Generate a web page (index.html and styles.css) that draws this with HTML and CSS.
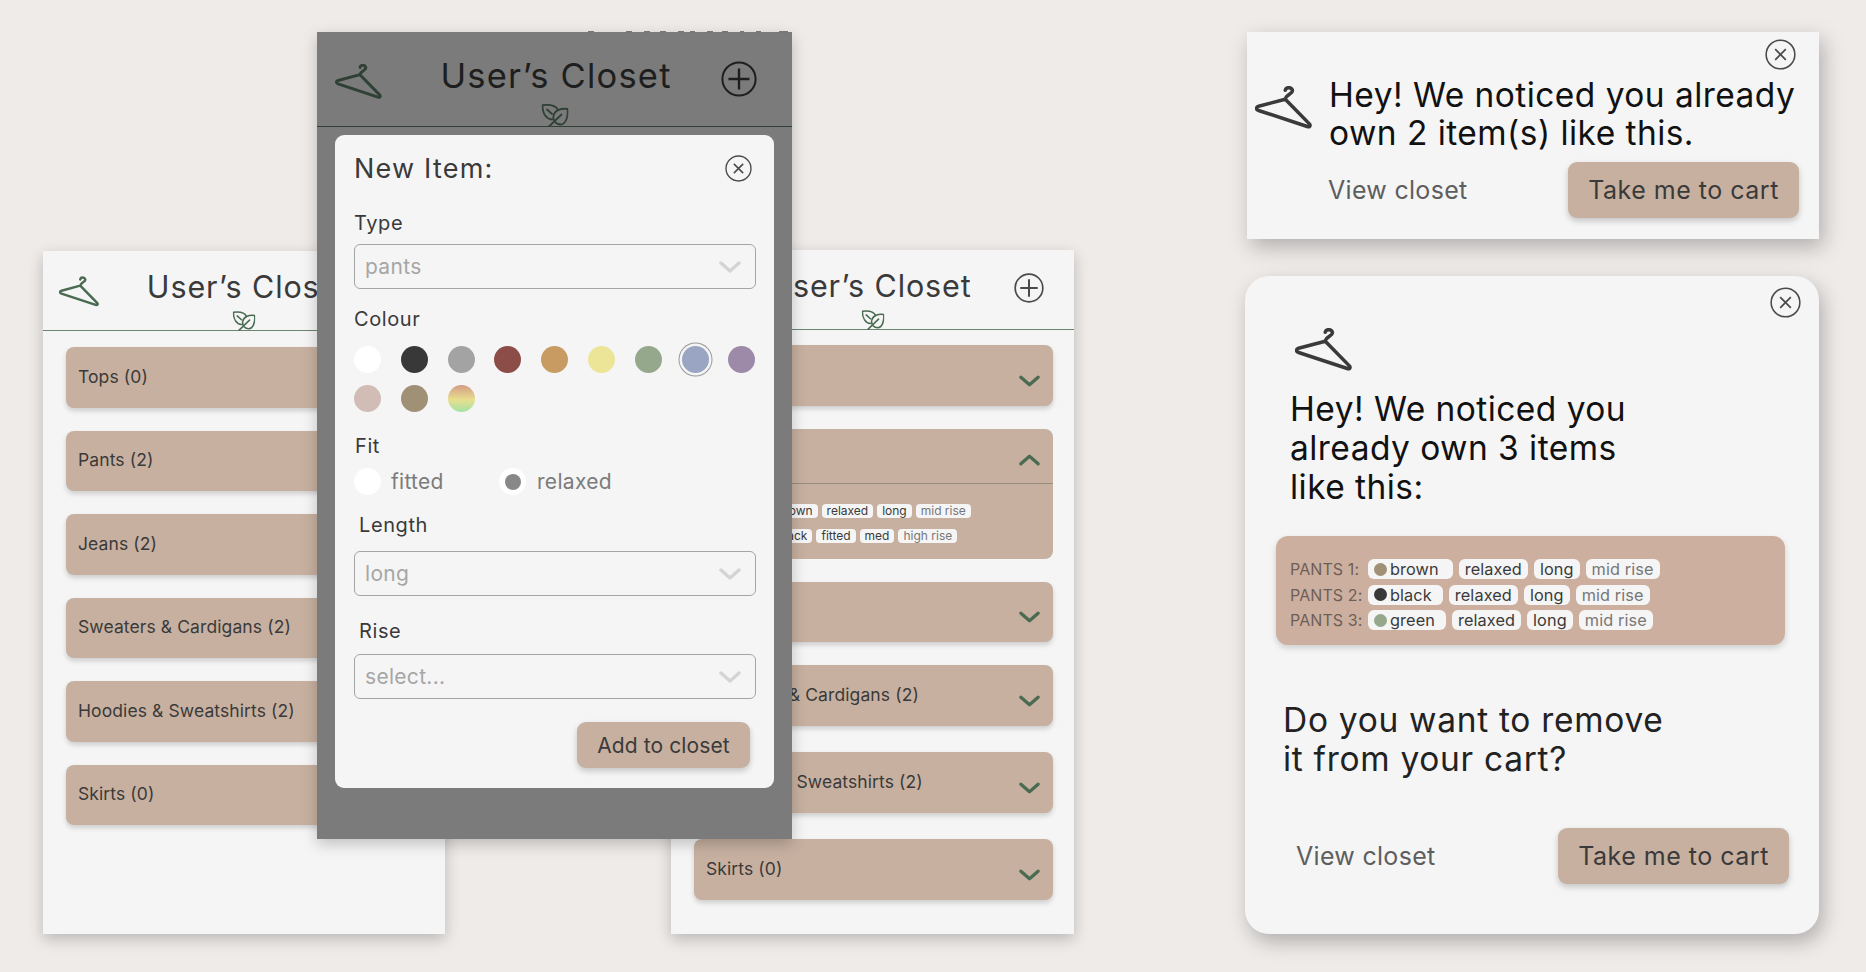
FILE: index.html
```html
<!DOCTYPE html>
<html lang="en">
<head>
    <meta charset="UTF-8">
    <title>User's Closet</title>
    <link rel="stylesheet" href="styles.css">
</head>
<body>
    <svg width="0" height="0" class="defs">
        <symbol id="hanger" viewBox="0 0 48 36">
            <path d="M25.5 3.5C26 .8 30.5 .4 31.5 3.5 32.2 6.5 26.5 6.5 25.5 11L46 32C47 34 45.5 34.5 44 34L3 20.5C.5 19.5 1 17.5 3 17L25.5 11" fill="none" stroke="currentColor" stroke-width="3" stroke-linecap="round" stroke-linejoin="round"/>
        </symbol>
        <symbol id="leaf" viewBox="0 0 27 23">
            <path d="M10.5 15.5C5 15 1 10 1 1.2 7 .4 14 1 16.5 6M5.5 5.5 10.5 10M26 5C20 4 13 6 12 12 11 17 15 20.5 19 20.5 24 20.5 27 13 26 5ZM7.5 22.5 20 10.5" fill="none" stroke="currentColor" stroke-width="1.8" stroke-linejoin="round" stroke-linecap="round"/>
        </symbol>
        <symbol id="plus" viewBox="0 0 36 36">
            <circle cx="18" cy="18" r="16.6" fill="none" stroke="currentColor" stroke-width="2"/>
            <path d="M18 7.5V28.5M7.5 18H28.5" stroke="currentColor" stroke-width="2.4"/>
        </symbol>
        <symbol id="close" viewBox="0 0 32 32">
            <circle cx="16" cy="16" r="14.8" fill="none" stroke="currentColor" stroke-width="1.6"/>
            <path d="M10.5 10.5 21.5 21.5M21.5 10.5 10.5 21.5" stroke="currentColor" stroke-width="1.8"/>
        </symbol>
        <symbol id="chevron" viewBox="0 0 22 12">
            <path d="M2 2 11 10 20 2" fill="none" stroke="currentColor" stroke-width="3.4" stroke-linecap="round" stroke-linejoin="round"/>
        </symbol>
    </svg>

    <!-- closet list, behind the overlay -->
    <section class="screen screen-left">
        <header class="head">
            <svg class="hanger"><use href="#hanger"/></svg>
            <h1 class="title">User’s Closet</h1>
            <svg class="plus"><use href="#plus"/></svg>
            <svg class="leaf"><use href="#leaf"/></svg>
        </header>
        <div class="rows">
            <div class="row"><span>Tops (0)</span></div>
            <div class="row"><span>Pants (2)</span></div>
            <div class="row"><span>Jeans (2)</span></div>
            <div class="row"><span>Sweaters &amp; Cardigans (2)</span></div>
            <div class="row"><span>Hoodies &amp; Sweatshirts (2)</span></div>
            <div class="row"><span>Skirts (0)</span></div>
        </div>
    </section>

    <!-- closet list with pants opened -->
    <section class="screen screen-right">
        <header class="head">
            <svg class="hanger"><use href="#hanger"/></svg>
            <h1 class="title">User’s Closet</h1>
            <svg class="plus"><use href="#plus"/></svg>
            <svg class="leaf"><use href="#leaf"/></svg>
        </header>
        <div class="rows">
            <div class="row"><span>Tops (0)</span><svg class="chev"><use href="#chevron"/></svg></div>
            <div class="row row-open">
                <div class="row-top"><span>Pants (2)</span><svg class="chev chev-up"><use href="#chevron"/></svg></div>
                <div class="row-body">
                    <div class="minis"><span class="mini-label">PANTS 1:</span><span class="mini">brown</span><span class="mini">relaxed</span><span class="mini">long</span><span class="mini mini-soft">mid rise</span></div>
                    <div class="minis"><span class="mini-label">PANTS 2:</span><span class="mini">black</span><span class="mini">fitted</span><span class="mini">med</span><span class="mini mini-soft">high rise</span></div>
                </div>
            </div>
            <div class="row"><span>Jeans (2)</span><svg class="chev"><use href="#chevron"/></svg></div>
            <div class="row"><span>Sweaters &amp; Cardigans (2)</span><svg class="chev"><use href="#chevron"/></svg></div>
            <div class="row row-far"><span>Hoodies &amp; Sweatshirts (2)</span><svg class="chev"><use href="#chevron"/></svg></div>
            <div class="row row-far"><span>Skirts (0)</span><svg class="chev"><use href="#chevron"/></svg></div>
        </div>
    </section>

    <svg class="clipped" width="240" height="2">
        <path d="M28 0h6v2h-6zM66 0h6v2h-6zM84 0h6v2h-6zM100 0h6v2h-6zM118 0h6v2h-6zM130 0h5v2h-5zM147 0h6v2h-6zM162 0h6v2h-6zM180 0h4v2h-4zM196 0h5v2h-5zM219 0h9v2h-9z" fill="#777"/>
    </svg>

    <!-- new item form -->
    <section class="screen screen-dim">
        <header class="head">
            <svg class="hanger"><use href="#hanger"/></svg>
            <h1 class="title">User’s Closet</h1>
            <svg class="plus"><use href="#plus"/></svg>
            <svg class="leaf"><use href="#leaf"/></svg>
        </header>
        <form class="modal">
            <div class="modal-head">
                <h2 class="modal-title">New Item:</h2>
                <svg class="close-sm"><use href="#close"/></svg>
            </div>
            <div class="label label-type">Type</div>
            <div class="select"><span>pants</span><svg class="chev"><use href="#chevron"/></svg></div>
            <div class="label label-colour">Colour</div>
            <div class="swatches">
                <i class="swatch c-white"></i>
                <i class="swatch c-black"></i>
                <i class="swatch c-grey"></i>
                <i class="swatch c-red"></i>
                <i class="swatch c-orange"></i>
                <i class="swatch c-yellow"></i>
                <i class="swatch c-green"></i>
                <i class="swatch c-blue picked"></i>
                <i class="swatch c-purple"></i>
                <i class="swatch c-pink"></i>
                <i class="swatch c-brown"></i>
                <i class="swatch c-multi"></i>
            </div>
            <div class="label label-fit">Fit</div>
            <div class="fits">
                <i class="radio"></i><span class="fit-text">fitted</span>
                <i class="radio radio-on"></i><span class="fit-text">relaxed</span>
            </div>
            <div class="label label-length">Length</div>
            <div class="select"><span>long</span><svg class="chev"><use href="#chevron"/></svg></div>
            <div class="label label-rise">Rise</div>
            <div class="select"><span>select...</span><svg class="chev"><use href="#chevron"/></svg></div>
            <div class="modal-foot"><button type="button" class="btn btn-sm">Add to closet</button></div>
        </form>
    </section>

    <!-- small nudge -->
    <section class="card card-small">
        <svg class="close"><use href="#close"/></svg>
        <div class="nudge">
            <svg class="hanger-dark"><use href="#hanger"/></svg>
            <p class="say">Hey! We noticed you already<br>own 2 item(s) like this.</p>
        </div>
        <div class="actions">
            <a class="link">View closet</a>
            <button type="button" class="btn">Take me to cart</button>
        </div>
    </section>

    <!-- detailed nudge -->
    <section class="card card-big">
        <svg class="close"><use href="#close"/></svg>
        <svg class="hanger-dark"><use href="#hanger"/></svg>
        <p class="say say-first">Hey! We noticed you<br>already own 3 items<br>like this:</p>
        <div class="panel">
            <div class="line"><span class="line-label">PANTS 1:</span><span class="tag tag-wide"><i class="dot c-brown"></i>brown</span><span class="tag">relaxed</span><span class="tag">long</span><span class="tag tag-soft">mid rise</span></div>
            <div class="line"><span class="line-label">PANTS 2:</span><span class="tag"><i class="dot c-black"></i>black</span><span class="tag">relaxed</span><span class="tag">long</span><span class="tag tag-soft">mid rise</span></div>
            <div class="line"><span class="line-label">PANTS 3:</span><span class="tag"><i class="dot c-green"></i>green</span><span class="tag">relaxed</span><span class="tag">long</span><span class="tag tag-soft">mid rise</span></div>
        </div>
        <p class="say say-second">Do you want to remove<br>it from your cart?</p>
        <div class="actions actions-big">
            <a class="link">View closet</a>
            <button type="button" class="btn">Take me to cart</button>
        </div>
    </section>
</body>
</html>
```

FILE: styles.css
```css
body {
    margin: 0;
    width: 1866px;
    height: 972px;
    overflow: hidden;
    position: relative;
    background-color: #eeebe9;
    color: #3a3a3a;
    font-family: Inter, "Noto Sans", sans-serif;
}
.defs {
    position: absolute;
}

/* phone screens sit freely on the board */
.screen {
    position: absolute;
    box-sizing: border-box;
    background-color: #f5f5f5;
    box-shadow: 0 5px 14px rgba(0, 0, 0, .22);
}
.screen-left {
    left: 43px;
    top: 251px;
    width: 402px;
    height: 683px;
}
.screen-right {
    left: 671px;
    top: 250px;
    width: 403px;
    height: 684px;
}
.screen-dim {
    left: 317px;
    top: 32px;
    width: 475px;
    height: 807px;
    background-color: #7b7b7b;
    color: #1e1e1e;
    z-index: 2;
}
.clipped {
    position: absolute;
    left: 560px;
    top: 31px;
    z-index: 3;
}

.head {
    position: relative;
    display: flex;
    justify-content: space-between;
    align-items: flex-start;
    box-sizing: border-box;
    height: 80px;
    padding: 0 30px 0 16px;
    border-bottom: 1.5px solid #6c8570;
    color: #4a6b52;
}
.hanger {
    width: 40px;
    height: 31px;
    margin-top: 25px;
}
.plus {
    width: 30px;
    height: 30px;
    margin-top: 23px;
    color: #4a4a4a;
}
.title {
    margin: 19px 0 0;
    font-size: 30.5px;
    line-height: 34px;
    font-weight: 400;
    letter-spacing: .9px;
    white-space: nowrap;
    color: #3a3a3a;
}
.leaf {
    position: absolute;
    left: 50%;
    bottom: -1px;
    width: 23px;
    height: 20px;
    transform: translateX(-50%);
}
.screen-left .title {
    margin-left: 12px;
}
.screen-dim .head {
    height: 95px;
    padding: 0 35px 0 18px;
    border-bottom-color: #2f4034;
    color: #2f4034;
}
.screen-dim .hanger {
    width: 47px;
    height: 35px;
    margin-top: 32px;
}
.screen-dim .title {
    margin: 25px 0 0 9px;
    font-size: 34.5px;
    line-height: 38px;
    letter-spacing: 1.2px;
    color: #1e1e1e;
}
.screen-dim .plus {
    width: 36px;
    height: 36px;
    margin-top: 29px;
    color: #1e1e1e;
}
.screen-dim .leaf {
    width: 27px;
    height: 23px;
    bottom: -1px;
}

.rows {
    display: flex;
    flex-direction: column;
    gap: 23px;
    padding: 16px 21px 0 23px;
}
.screen-right .rows {
    padding-top: 15px;
}
.row {
    display: flex;
    justify-content: space-between;
    align-items: center;
    box-sizing: border-box;
    height: 60.5px;
    padding: 0 13px 2px 12px;
    border-radius: 8px;
    background-color: #c7b0a0;
    box-shadow: 0 3px 5px rgba(0, 0, 0, .16);
    font-size: 17.5px;
    letter-spacing: .1px;
}
.row-far {
    margin-top: 3.5px;
}
.row-open {
    display: block;
    height: 130px;
    padding: 0;
    box-shadow: none;
}
.row-top {
    display: flex;
    justify-content: space-between;
    align-items: center;
    box-sizing: border-box;
    height: 55px;
    padding: 0 13px 0 12px;
    border-bottom: 1.5px solid #9a8b80;
}
.row-body {
    display: flex;
    flex-direction: column;
    gap: 11px;
    padding: 20px 0 0 12px;
}
.minis {
    display: flex;
    align-items: center;
    gap: 4px;
    height: 14px;
    font-size: 12px;
    letter-spacing: 0;
}
.mini-label {
    width: 62px;
    white-space: nowrap;
}
.mini {
    padding: 0 5px;
    line-height: 14px;
    border-radius: 4px;
    background-color: #f5f5f5;
}
.mini-soft {
    color: #777;
}
.chev {
    width: 21px;
    height: 12px;
    margin-top: 13px;
    color: #4a6b52;
}
.chev-up {
    margin-top: 8px;
    transform: rotate(180deg);
}

/* form over the dimmed screen */
.modal {
    position: absolute;
    left: 18px;
    top: 103px;
    box-sizing: border-box;
    width: 439px;
    height: 653px;
    padding: 0 18px 0 19px;
    border-radius: 9px;
    background-color: #f5f5f5;
    color: #3a3a3a;
}
.modal-head {
    display: flex;
    justify-content: space-between;
    align-items: center;
    height: 66px;
}
.modal-title {
    margin: 0;
    font-size: 27px;
    font-weight: 400;
    letter-spacing: 1.2px;
}
.close-sm {
    width: 27px;
    height: 27px;
    margin-right: 4px;
    color: #4a4a4a;
}
.label {
    font-size: 20px;
    line-height: 24px;
    letter-spacing: .6px;
}
.label-type {
    margin: 10px 0 9px;
}
.label-colour {
    margin: 18px 0 15px;
}
.label-fit {
    margin: 22px 0 10px;
    padding-left: 1px;
}
.label-length {
    margin: 18px 0 14px;
    padding-left: 5px;
}
.label-rise {
    margin: 23px 0 11px;
    padding-left: 5px;
}
.select {
    display: flex;
    justify-content: space-between;
    align-items: center;
    box-sizing: border-box;
    height: 45px;
    padding: 0 14px 0 10px;
    border: 1.5px solid #a5a5a5;
    border-radius: 6px;
    color: #a6a6a6;
    font-size: 21px;
    letter-spacing: .3px;
}
.select .chev {
    width: 22px;
    margin-top: 0;
    color: #d4d4d4;
}
.swatches {
    display: flex;
    flex-wrap: wrap;
    gap: 12px 19.8px;
    margin-right: -2px;
}
.swatch {
    width: 27px;
    height: 27px;
    border-radius: 50%;
}
.picked {
    box-shadow: 0 0 0 2.5px #f5f5f5, 0 0 0 3.5px #999;
}
.c-white { background-color: #fff; }
.c-black { background-color: #383838; }
.c-grey { background-color: #a3a3a3; }
.c-red { background-color: #8c4d49; }
.c-orange { background-color: #c89b62; }
.c-yellow { background-color: #ece497; }
.c-green { background-color: #95a88b; }
.c-blue { background-color: #9aa5c3; }
.c-purple { background-color: #9d8aa8; }
.c-pink { background-color: #d1bcb6; }
.c-brown { background-color: #a09075; }
.c-multi { background: linear-gradient(#d49c86, #e8df8e 55%, #a3e2a5); }
.fits {
    display: flex;
    align-items: center;
    height: 27px;
    color: #7b7b7b;
    font-size: 21px;
    letter-spacing: .3px;
}
.radio {
    position: relative;
    width: 27px;
    height: 27px;
    border-radius: 50%;
    background-color: #fff;
}
.radio-on::after {
    content: "";
    position: absolute;
    left: 5.5px;
    top: 5.5px;
    width: 16px;
    height: 16px;
    border-radius: 50%;
    background-color: #888;
}
.fit-text {
    width: 118px;
    padding-left: 10px;
    box-sizing: border-box;
}
.fit-text:last-child {
    padding-left: 11px;
}
.modal-foot {
    display: flex;
    justify-content: flex-end;
    margin: 23px 6px 0 0;
}
.btn {
    box-sizing: border-box;
    width: 231px;
    height: 56px;
    padding: 0;
    border: none;
    border-radius: 9px;
    background-color: #c7b0a0;
    box-shadow: 0 3px 6px rgba(0, 0, 0, .2);
    color: #3a3a3a;
    font-family: inherit;
    font-size: 25px;
    letter-spacing: .5px;
}
.btn-sm {
    width: 173px;
    height: 46px;
    font-size: 21px;
    letter-spacing: .1px;
}

/* nudge cards */
.card {
    position: absolute;
    box-sizing: border-box;
    background-color: #f5f5f5;
    box-shadow: 4px 8px 20px rgba(0, 0, 0, .26);
}
.card-small {
    left: 1247px;
    top: 32px;
    width: 572px;
    height: 207px;
    padding: 44px 20px 0 8px;
}
.card-big {
    left: 1245px;
    top: 276px;
    width: 574px;
    height: 658px;
    padding: 52px 34px 0 0;
    border-radius: 24px;
}
.close {
    position: absolute;
    right: 23px;
    top: 7px;
    width: 31px;
    height: 31px;
    color: #4a4a4a;
}
.card-big .close {
    right: 18px;
    top: 11px;
}
.nudge {
    display: flex;
    align-items: flex-start;
}
.hanger-dark {
    display: block;
    flex: none;
    width: 57px;
    height: 43px;
    color: #3a3a3a;
}
.nudge .hanger-dark {
    margin-top: 10px;
}
.card-big .hanger-dark {
    margin-left: 50px;
}
.say {
    margin: 0 0 0 17px;
    color: #111;
    font-size: 33.5px;
    line-height: 38px;
    letter-spacing: .45px;
    white-space: nowrap;
}
.say-first {
    margin: 19px 0 0 45px;
    line-height: 39px;
}
.say-second {
    margin: 56px 0 0 38px;
    line-height: 39px;
    letter-spacing: .7px;
    color: #222;
}
.panel {
    display: flex;
    flex-direction: column;
    gap: 5px;
    box-sizing: border-box;
    height: 109px;
    margin: 29px 0 0 31px;
    padding: 23px 0 0 14px;
    border-radius: 12px;
    background-color: #cdaf9f;
    box-shadow: 0 3px 6px rgba(0, 0, 0, .16);
}
.line {
    display: flex;
    align-items: center;
    gap: 6px;
    height: 20.5px;
    font-size: 16.3px;
    letter-spacing: .1px;
}
.line-label {
    width: 71px;
    margin-right: 1px;
    color: #6d5f58;
    font-size: 16px;
    white-space: nowrap;
}
.tag {
    display: flex;
    align-items: center;
    gap: 3px;
    height: 20px;
    padding: 0 6px;
    border-radius: 6px;
    background-color: #f5f5f5;
    white-space: nowrap;
}
.tag:nth-child(2) {
    padding-right: 11px;
}
.tag-wide:nth-child(2) {
    padding-right: 14px;
}
.tag-soft {
    color: #777;
}
.dot {
    width: 13px;
    height: 13px;
    border-radius: 50%;
}
.actions {
    display: flex;
    justify-content: space-between;
    align-items: center;
    margin-top: 10px;
    padding-left: 73px;
}
.actions-big {
    margin-top: 49px;
    padding-left: 51px;
    margin-right: -4px;
}
.link {
    color: #5e5e5e;
    font-size: 25px;
    letter-spacing: .3px;
}
```
